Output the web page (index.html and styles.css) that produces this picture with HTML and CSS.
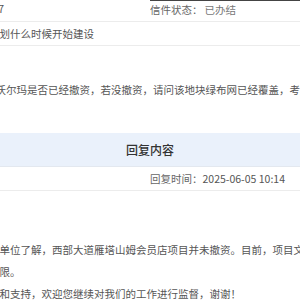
FILE: index.html
```html
<!DOCTYPE html>
<html lang="zh-CN">
<head>
    <meta charset="UTF-8">
    <meta name="viewport" content="width=device-width, initial-scale=1.0">
    <title>信件详情</title>
    <link rel="stylesheet" href="styles.css">
</head>
<body>
    <div class="page">
        <div class="row first">
            <div class="cell"><span class="label">信件编号：</span>20250607</div>
            <div class="cell status"><span class="label">信件状态：</span><span class="value">已办结</span></div>
        </div>
        <div class="row">
            <div class="cell wide"><span class="label">信件标题：</span>沃尔玛计划什么时候开始建设</div>
        </div>
        <div class="letter-body">您好，请问西部大道沃尔玛是否已经撤资，若没撤资，请问该地块绿布网已经覆盖，考虑何时建设？</div>

        <div class="reply-head">回复内容</div>
        <div class="row">
            <div class="cell"></div>
            <div class="cell time"><span class="label">回复时间：</span>2025-06-05 10:14</div>
        </div>
        <div class="reply-body">
            <p>您好！经咨询区相关单位了解，西部大道雁塔山姆会员店项目并未撤资。目前，项目文件正在报批中，<br>开工时间暂无确定期限。</p>
            <p>感谢您对此事的理解和支持，欢迎您继续对我们的工作进行监督，谢谢！</p>
        </div>
    </div>
</body>
</html>
```

FILE: styles.css
```css
html, body {
    margin: 0;
    overflow: hidden;
    background: #fff;
}
body {
    font-family: "Noto Sans CJK SC", "Noto Sans", sans-serif;
    font-size: 10.5px;
    color: #555;
}
/* page is wider than the window, table centre sits at x=150 */
.page {
    width: 510px;
    margin-left: -105px;
}
.row {
    display: grid;
    grid-template-columns: 1fr 1fr;
    height: 23px;
    line-height: 23px;
    border-bottom: 1px solid #ececec;
    white-space: nowrap;
}
.row.first {
    height: 21px;
    line-height: 18px;
}
.cell {
    padding-left: 10px;
    overflow: hidden;
}
.cell.wide {
    grid-column: 1 / 3;
}
.status,
.time {
    padding-left: 0;
}
.status {
    border-top: 1px solid #444;
}
.label {
    color: #666;
}
.status .value {
    margin-left: 2px;
    color: #777;
}
.letter-body {
    padding: 32px 6px;
    line-height: 23px;
    white-space: nowrap;
}
.reply-head {
    height: 33px;
    line-height: 33px;
    text-align: center;
    background: #eaf1fb;
    border-bottom: 1px solid #e3e8ef;
    font-size: 12px;
    font-weight: 500;
    color: #333;
}
.reply-body {
    padding: 48px 10px 0;
    line-height: 22px;
}
.reply-body p {
    margin: 0;
    white-space: nowrap;
}
```
